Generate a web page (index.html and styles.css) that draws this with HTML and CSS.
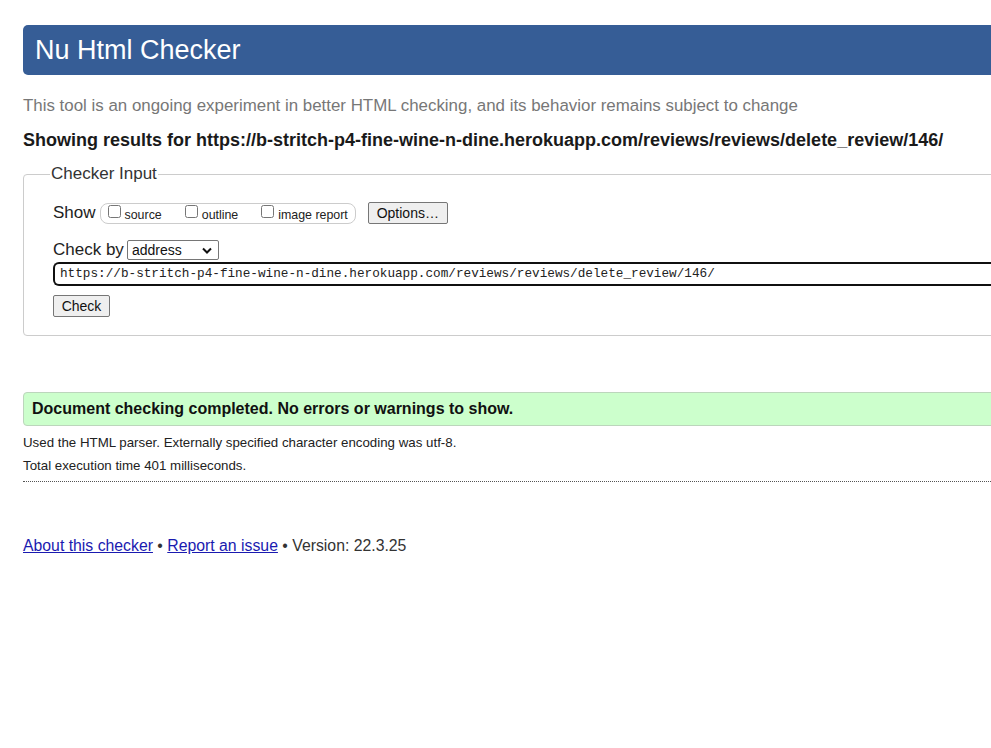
FILE: index.html
```html
<!DOCTYPE html>
<html lang="en">
<head>
<meta charset="utf-8">
<title>Showing results for https://b-stritch-p4-fine-wine-n-dine.herokuapp.com/reviews/reviews/delete_review/146/ - Nu Html Checker</title>
<link rel="stylesheet" href="styles.css">
</head>
<body>
<div class="page">
  <h1 class="title">Nu Html Checker</h1>
  <p class="intro">This tool is an ongoing experiment in better HTML checking, and its behavior remains subject to change</p>
  <p class="showing">Showing results for https://b-stritch-p4-fine-wine-n-dine.herokuapp.com/reviews/reviews/delete_review/146/</p>
  <fieldset class="input-box">
    <legend class="legend">Checker Input</legend>
    <div class="row show-row">
      <span class="lbl">Show</span>
      <span class="opts">
        <label class="opt"><input type="checkbox" class="cb"><span>source</span></label>
        <label class="opt"><input type="checkbox" class="cb"><span>outline</span></label>
        <label class="opt"><input type="checkbox" class="cb"><span>image report</span></label>
      </span>
      <button class="btn btn-options" type="button">Options…</button>
    </div>
    <div class="row check-row">
      <span class="lbl">Check by</span>
      <span class="select">address<svg class="chev" width="10" height="7" viewBox="0 0 10 7"><path d="M1 1.5 L5 5.5 L9 1.5" fill="none" stroke="#111" stroke-width="2"/></svg></span>
    </div>
    <div class="url">https://b-stritch-p4-fine-wine-n-dine.herokuapp.com/reviews/reviews/delete_review/146/</div>
    <button class="btn btn-check" type="button">Check</button>
  </fieldset>
  <div class="success">Document checking completed. No errors or warnings to show.</div>
  <p class="details">Used the HTML parser. Externally specified character encoding was utf-8.</p>
  <p class="details">Total execution time 401 milliseconds.</p>
  <hr class="dotted">
  <p class="footer"><a href="#">About this checker</a> • <a href="#">Report an issue</a> • Version: 22.3.25</p>
</div>
</body>
</html>
```
FILE: styles.css
```css
html, body {
  margin: 0;
  padding: 0;
  background: #fff;
  overflow: hidden;
}
body {
  font-family: "Liberation Sans", Arial, sans-serif;
  color: #222;
}
.page {
  width: 1100px;
  padding: 25px 0 0 23px;
}
.title {
  margin: 0;
  height: 50px;
  line-height: 50px;
  background: #365d96;
  color: #fff;
  font-weight: normal;
  font-size: 27px;
  padding-left: 12px;
  border-radius: 5px;
}
.intro {
  margin: 22px 0 0;
  font-size: 16.9px;
  line-height: 18px;
  color: #777;
}
.showing {
  margin: 15px 0 0;
  font-size: 18px;
  line-height: 20px;
  font-weight: bold;
  color: #1a1a1a;
}
.input-box {
  margin: 14px 0 0;
  border: 1px solid #ccc;
  border-radius: 4px;
  padding: 8px 29px 18px 29px;
  min-width: 0;
}
.legend {
  font-size: 17px;
  color: #333;
  padding: 0 1px;
  margin-left: -3px;
}
.row {
  display: flex;
  align-items: center;
}
.show-row {
  margin-top: 9px;
  height: 24px;
}
.lbl {
  font-size: 17px;
  color: #222;
  margin-right: 4px;
}
.opts {
  display: flex;
  align-items: center;
  height: 19px;
  border: 1px solid #ccc;
  border-radius: 8px;
  padding: 0 7px 0 7px;
  gap: 23px;
}
.opt {
  display: flex;
  align-items: flex-end;
  font-size: 12.4px;
  color: #222;
}
.cb {
  margin: 0 4px 3px 0;
  width: 13px;
  height: 13px;
}
.opt span {
  position: relative;
  top: 1px;
}
.btn {
  font-family: "Liberation Sans", Arial, sans-serif;
  font-size: 14px;
  color: #111;
  background: #efefef;
  border: 1px solid #767676;
  border-radius: 2px;
  padding: 1px 6px;
  height: 22px;
}
.btn-options {
  margin-left: 12px;
  width: 80px;
}
.check-row {
  margin-top: 15px;
}
.check-row .lbl {
  margin-right: 3px;
}
.select {
  display: inline-flex;
  align-items: center;
  justify-content: space-between;
  box-sizing: border-box;
  width: 92px;
  height: 20px;
  border: 1px solid #767676;
  border-radius: 2px;
  padding: 0 4px 0 4px;
  font-size: 14px;
  color: #111;
}
.chev {
  margin-right: 2px;
}
.url {
  margin-top: 2px;
  box-sizing: border-box;
  height: 24px;
  line-height: 20px;
  border: 2px solid #101010;
  border-right: none;
  border-radius: 6px 0 0 6px;
  padding-left: 5px;
  font-family: "Liberation Mono", monospace;
  font-size: 12.7px;
  color: #222;
  white-space: nowrap;
}
.btn-check {
  margin-top: 9px;
  width: 57px;
}
.success {
  margin-top: 56px;
  box-sizing: border-box;
  height: 34px;
  line-height: 32px;
  background: #ccffcc;
  border: 1px solid #bcd6bc;
  border-radius: 4px;
  padding-left: 8px;
  font-weight: bold;
  font-size: 16px;
  color: #111;
}
.details {
  margin: 9px 0 0;
  font-size: 13.3px;
  line-height: 15px;
  color: #222;
}
.details + .details {
  margin-top: 8px;
}
.dotted {
  margin: 8px 0 0;
  border: none;
  border-top: 1px dotted #555;
  height: 0;
}
.footer {
  margin: 55px 0 0;
  font-size: 15.8px;
  line-height: 18px;
  color: #333;
}
.footer a {
  color: #1a1ab0;
}
```
